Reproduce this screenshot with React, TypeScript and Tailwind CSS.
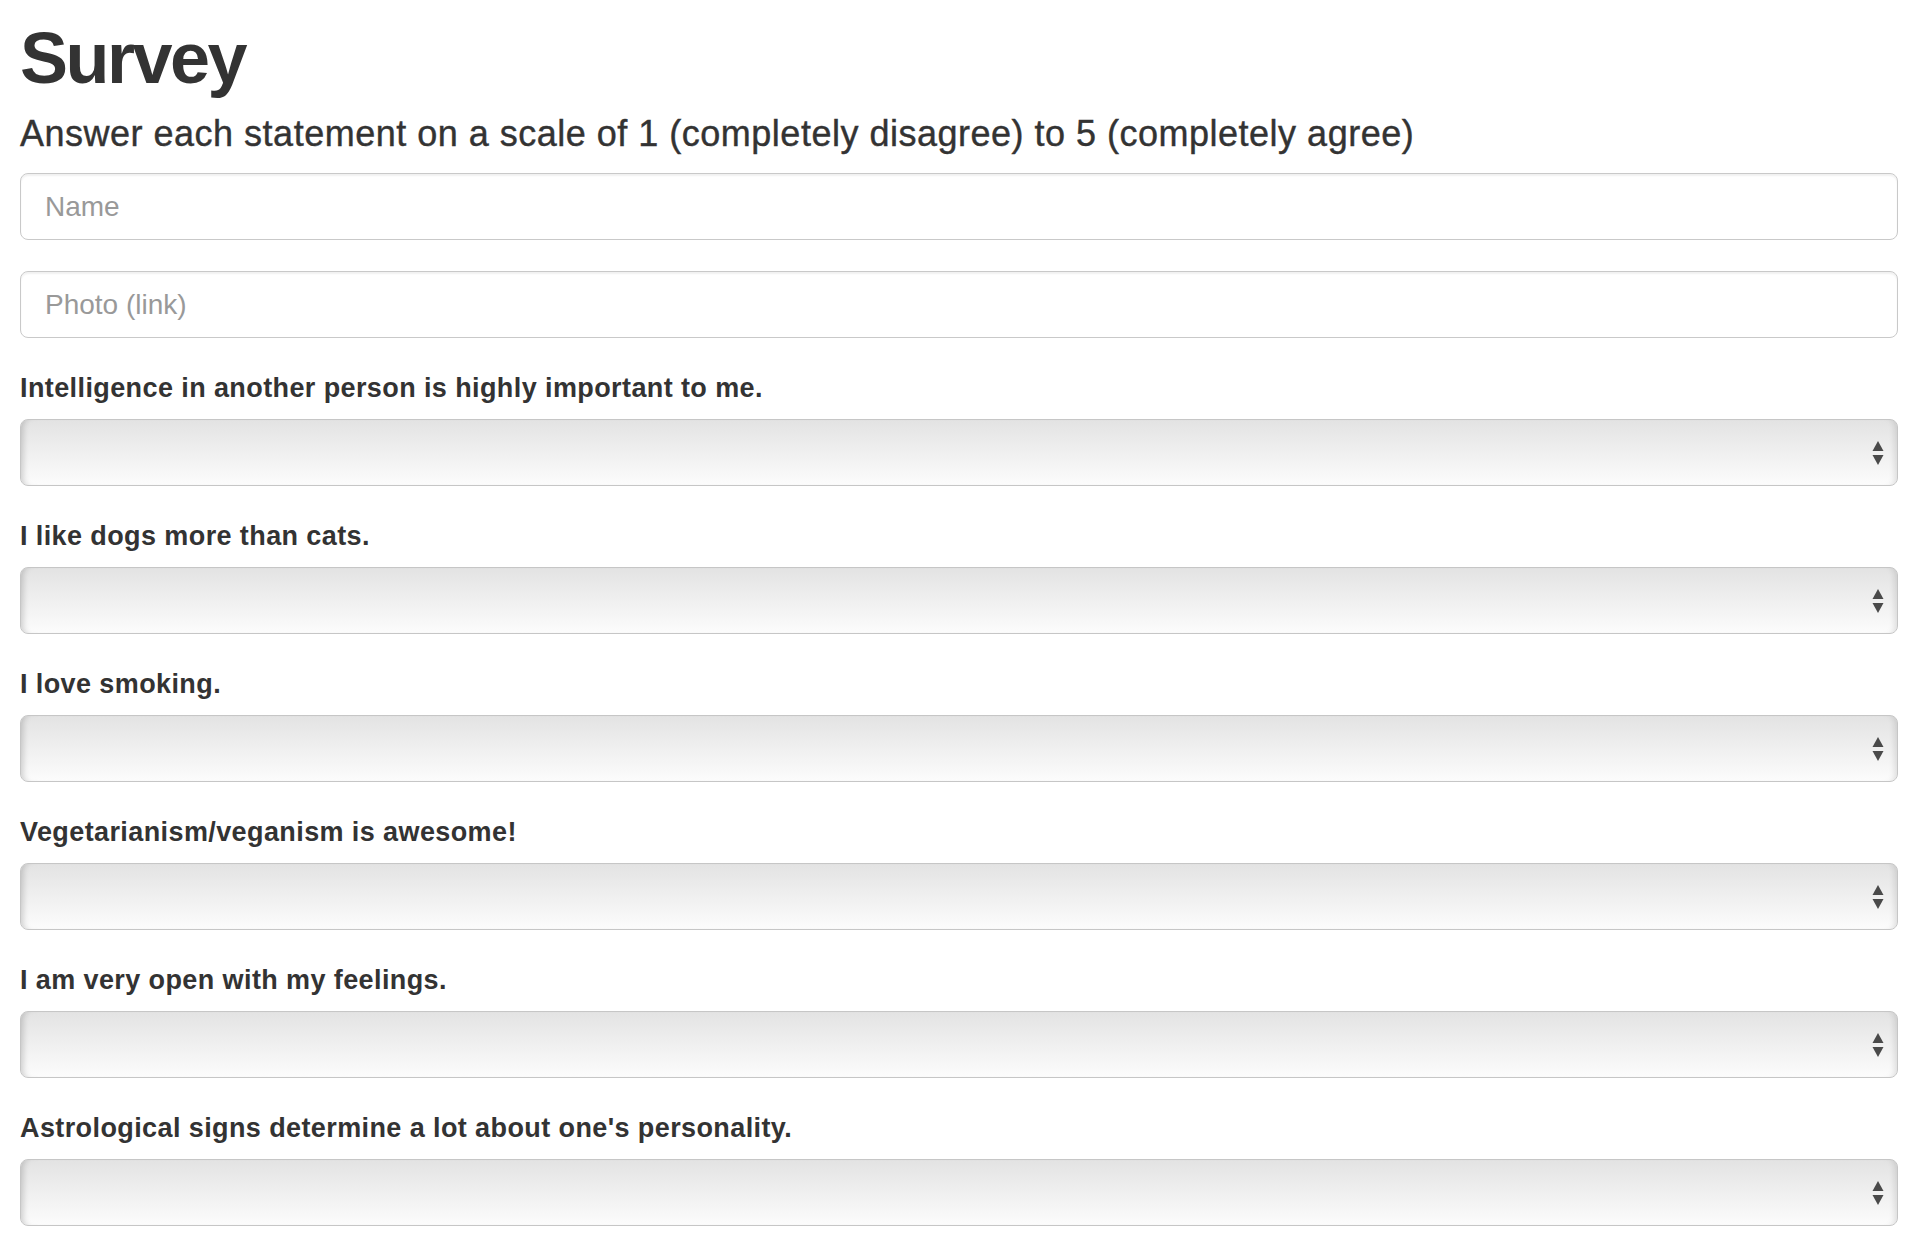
import { useState } from "react";

const questions = [
  "Intelligence in another person is highly important to me.",
  "I like dogs more than cats.",
  "I love smoking.",
  "Vegetarianism/veganism is awesome!",
  "I am very open with my feelings.",
  "Astrological signs determine a lot about one's personality.",
];

function Arrows() {
  return (
    <svg
      className="pointer-events-none absolute right-[14px] top-1/2 -translate-y-1/2"
      width="12"
      height="26"
      viewBox="0 0 12 26"
    >
      <path d="M6 1 L11.5 11 L0.5 11 Z" fill="#4a4a4a" />
      <path d="M0.5 15 L11.5 15 L6 25 Z" fill="#4a4a4a" />
    </svg>
  );
}

function Question({ label }: { label: string }) {
  const [value, setValue] = useState("");
  return (
    <div className="mb-[31px]">
      <label className="mb-[12px] block text-[27px] font-bold leading-[38px] tracking-[0.4px]">
        {label}
      </label>
      <div className="relative">
        <select
          value={value}
          onChange={(e) => setValue(e.target.value)}
          className="block h-[67px] w-full appearance-none rounded-[8px] border border-[#c6c6c6] bg-gradient-to-b from-[#e3e3e3] to-[#fcfcfc] shadow-[inset_7px_0_6px_-5px_rgba(0,0,0,0.18),inset_-7px_0_6px_-5px_rgba(0,0,0,0.12)] outline-none"
        >
          <option value=""></option>
          <option value="1">1 (Strongly Disagree)</option>
          <option value="2">2</option>
          <option value="3">3</option>
          <option value="4">4</option>
          <option value="5">5 (Strongly Agree)</option>
        </select>
        <Arrows />
      </div>
    </div>
  );
}

export default function App() {
  return (
    <div className="min-h-screen bg-white pl-[20px] pr-[30px] pt-[22px] font-['Liberation_Sans',Arial,sans-serif] text-[#333]">
      <h1 className="text-[72px] font-bold leading-none tracking-[-2.5px]">
        Survey
      </h1>
      <h4 className="mt-[20px] text-[36px] leading-[40px] tracking-[0.5px] [-webkit-text-stroke:0.4px_#333]">
        Answer each statement on a scale of 1 (completely disagree) to 5
        (completely agree)
      </h4>
      <form className="mt-[19px]">
        <input
          type="text"
          placeholder="Name"
          className="mb-[31px] block h-[67px] w-full rounded-[8px] border border-[#c9c9c9] px-[24px] text-[28px] shadow-[inset_0_2px_2px_rgba(0,0,0,0.06)] outline-none placeholder:text-[#999]"
        />
        <input
          type="text"
          placeholder="Photo (link)"
          className="mb-[31px] block h-[67px] w-full rounded-[8px] border border-[#c9c9c9] px-[24px] text-[28px] shadow-[inset_0_2px_2px_rgba(0,0,0,0.06)] outline-none placeholder:text-[#999]"
        />
        {questions.map((q) => (
          <Question key={q} label={q} />
        ))}
      </form>
    </div>
  );
}
